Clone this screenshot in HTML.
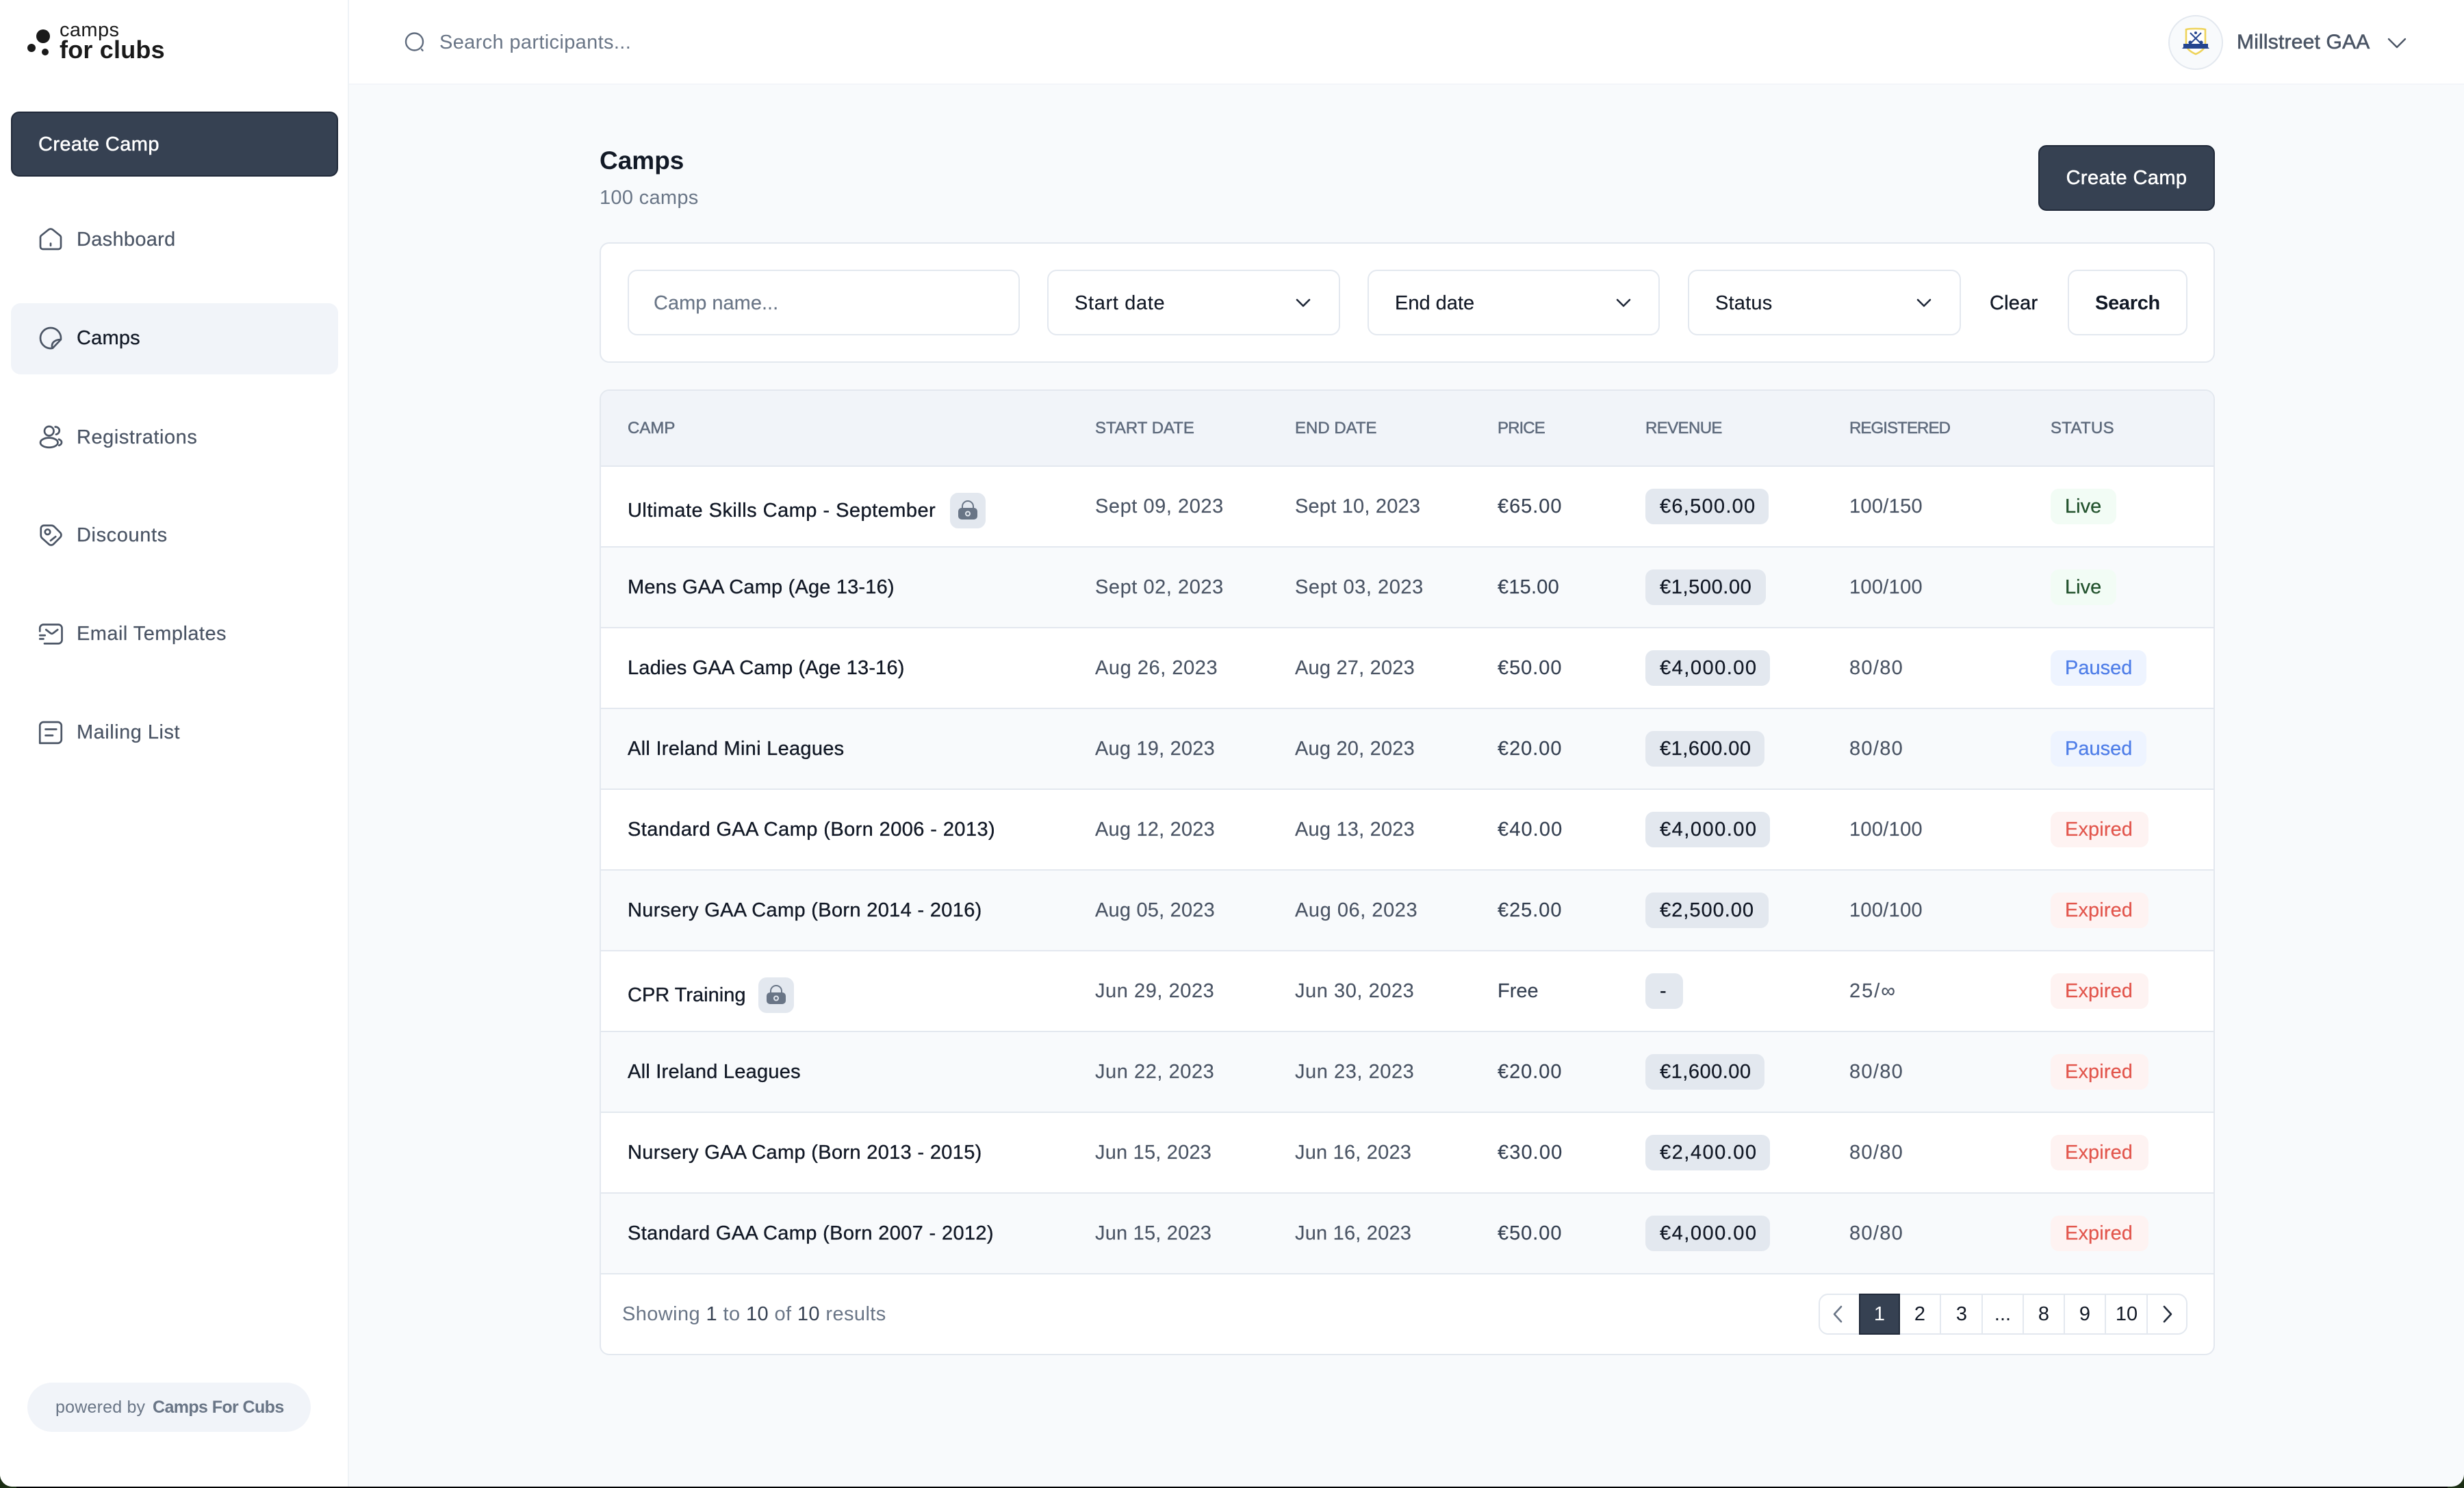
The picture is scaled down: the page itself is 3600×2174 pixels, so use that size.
<!DOCTYPE html>
<html lang="en">
<head>
<meta charset="utf-8">
<title>Camps</title>
<style>
*{box-sizing:border-box;margin:0;padding:0}
html,body{width:3600px;height:2174px;overflow:hidden;background:#000}
body{position:relative;font-family:"Liberation Sans",sans-serif;color:#121926}
.cn{position:absolute;width:24px;height:24px;background:#1b2e14}
.win{position:absolute;left:0;top:0;width:3600px;height:2172px;background:#f8fafc;overflow:hidden;border-radius:0 0 18px 18px}
.a{position:absolute;white-space:nowrap}
.m{-webkit-text-stroke:.4px currentColor}
.side{position:absolute;left:0;top:0;width:510px;height:2172px;background:#fff;border-right:2px solid #eef2f6}
.top{position:absolute;left:510px;top:0;width:3090px;height:124px;background:#fff;border-bottom:2px solid #f3f5f9}
.btn{position:absolute;background:#364152;border:2px solid #202939;border-radius:12px;color:#fff;font-size:29px;line-height:93px;letter-spacing:.4px;-webkit-text-stroke:.5px #fff}
.nav{position:absolute;left:112px;font-size:29px;line-height:40px;height:40px;color:#4b5565;white-space:nowrap;-webkit-text-stroke:.2px #4b5565}
.ic{position:absolute;left:56px;width:36px;height:36px;fill:none;stroke:#4b5565;stroke-width:1.8;stroke-linecap:round;stroke-linejoin:round}
.card{position:absolute;background:#fff;border:2px solid #e3e8ef;border-radius:14px}
.fld{position:absolute;top:394px;height:96px;background:#fff;border:2px solid #e3e8ef;border-radius:14px;font-size:29px;line-height:94px;color:#121926;white-space:nowrap;-webkit-text-stroke:.15px currentColor}
.chev{position:absolute;top:436px;width:24px;height:14px;fill:none;stroke:#202939;stroke-width:2.6;stroke-linecap:round;stroke-linejoin:round}
.tbl{position:absolute;left:876px;top:569px;width:2360px;height:1411px;background:#fff;border:2px solid #e3e8ef;border-radius:14px;overflow:hidden}
.hd{position:absolute;left:0;top:0;width:100%;height:111px;background:#f1f4f9;border-bottom:2px solid #e3e8ef;font-size:24px;line-height:109px;color:#5f6b7d;-webkit-text-stroke:.5px #5f6b7d}
.hd span{position:absolute;white-space:nowrap}
.r{position:absolute;left:0;width:100%;height:118px;border-bottom:2px solid #e3e8ef;background:#fff;font-size:29px;line-height:116px;color:#4b5565;-webkit-text-stroke:.15px #4b5565}
.r.alt{background:#f8fafc}
.r span,.r b{position:absolute;white-space:nowrap;font-weight:400}
.c1{left:39px}.c2{left:722px}.c3{left:1014px}.c5{left:1526px}.c6{left:1824px}.c7{left:2118px}
.r .c4{left:1310px;color:#364152;-webkit-text-stroke:.15px #364152}
.r .n{left:39px;color:#121926;-webkit-text-stroke:.35px #121926}
.r .n.lk{top:6px}
.r b{top:32px;height:52px;line-height:52px;border-radius:12px;padding:0 0 0 21px}
.rev{background:#e3e8ef;color:#121926;-webkit-text-stroke:.25px #121926;left:1526px}
.live{background:#f2fcf5;color:#22522d;left:2118px;width:96px;-webkit-text-stroke:.25px #22522d}
.paused{background:#eef4ff;color:#4f7ee8;left:2118px;width:140px;-webkit-text-stroke:.25px #4f7ee8}
.expired{background:#fef3f2;color:#e2564d;left:2118px;width:143px;letter-spacing:.1px;-webkit-text-stroke:.2px #e2564d}
.e1{letter-spacing:.2px}.e3{letter-spacing:.55px}.e0{letter-spacing:.1px}
.p1{letter-spacing:.95px}.p2{letter-spacing:.2px}.p3{letter-spacing:1.1px}
.g1{letter-spacing:.3px}.g2{letter-spacing:1.3px}
.lock{position:absolute;top:38px;width:52px;height:52px;background:#e3e8ef;border-radius:12px}
.lock svg{position:absolute;left:0;top:0;width:52px;height:52px}
.pg{position:absolute;left:2657px;top:1890px;width:539px;height:60px;border:2px solid #e3e8ef;border-radius:14px;background:#fff}
.pc{position:absolute;top:1890px;height:60px;width:60px;text-align:center;font-size:29px;line-height:57px;color:#121926;border-right:2px solid #e3e8ef;border-top:2px solid #e3e8ef;border-bottom:2px solid #e3e8ef}
</style>
</head>
<body>
<div class="cn" style="left:0;bottom:0"></div>
<div class="cn" style="right:0;bottom:0"></div>
<div class="win">

  <div class="top"></div>
  <div class="side"></div>

  <!-- logo -->
  <svg class="a" style="left:0;top:0" width="300" height="120" viewBox="0 0 300 120">
    <circle cx="63" cy="53" r="10" fill="#1a1a1a"/>
    <circle cx="46" cy="70" r="6" fill="#1a1a1a"/>
    <circle cx="66" cy="76" r="5" fill="#1a1a1a"/>
    <text x="87" y="53" font-family="Liberation Sans" font-size="29" letter-spacing=".4" fill="#1a1a1a">camps</text>
    <text x="87" y="85" font-family="Liberation Sans" font-size="36" font-weight="700" letter-spacing=".2" fill="#1a1a1a">for clubs</text>
  </svg>

  <div class="btn" style="left:16px;top:163px;width:478px;height:95px;padding-left:38px">Create Camp</div>

  <div class="a" style="left:16px;top:443px;width:478px;height:104px;background:#f1f4f9;border-radius:14px"></div>

  <svg class="ic" style="top:331px" viewBox="0 0 24 24"><path d="M2 10.6c0-.8.4-1.500 1-2l7-5.600c1.200-.9 2.800-.9 4 0l7 5.600c.6.5 1 1.200 1 2v9a2.400 2.400 0 0 1-2.400 2.400H4.400A2.400 2.400 0 0 1 2 19.600z"/><path d="M12 18.500V16.500"/></svg>
  <div class="nav" style="top:330px;letter-spacing:.3px">Dashboard</div>

  <svg class="ic" style="top:476px" viewBox="0 0 24 24"><path d="M12 22a10 10 0 1 1 10-10c0 .5 0 1-.15 1.500L14 21.700c-.6.200-1.300.3-2 .3z"/><path d="M14 21.700c-1.200-1-.8-4 .5-5.500 1.600-2 4.800-3 7.350-2.700"/></svg>
  <div class="nav" style="top:474px;color:#121926;-webkit-text-stroke:.3px #121926;letter-spacing:.2px">Camps</div>

  <svg class="ic" style="top:620px" viewBox="0 0 24 24"><circle cx="10.500" cy="6.500" r="4.500"/><ellipse cx="10.500" cy="17.800" rx="8.500" ry="4.700"/><path d="M16.500 2.400c2.300 0 4 1.600 4 3.600s-1.500 3.500-3.200 3.800"/><path d="M20 14.500c1.700.7 2.700 1.800 2.700 3s-.9 2.400-2.500 3"/></svg>
  <div class="nav" style="top:619px;letter-spacing:.55px">Registrations</div>

  <svg class="ic" style="top:764px" viewBox="0 0 24 24"><path d="M5.500 2.500h7.200c1.100 0 2.100.4 2.900 1.200l5.700 5.700c1.300 1.300 1.300 3.400 0 4.700l-6.500 6.500c-1.300 1.300-3.400 1.300-4.700 0l-6.200-5.500c-.9-.8-1.400-1.900-1.400-3.100V5.500c0-1.700 1.300-3 3-3z"/><circle cx="9" cy="8.800" r="2.500"/><path d="M12 17.200l4.800-3.800"/></svg>
  <div class="nav" style="top:762px;letter-spacing:.6px">Discounts</div>

  <svg class="ic" style="top:908px" viewBox="0 0 24 24"><path d="M1.500 9.500V6.500A3.500 3.500 0 0 1 5 3h14.500A3.500 3.500 0 0 1 23 6.500v11.500a3.500 3.500 0 0 1-3.500 3.500H6"/><path d="M7.500 8l4.700 3.600c.6.400 1.300.4 1.900 0L18.800 8"/><path d="M1.500 13.500H6.500"/><path d="M1.500 17H5"/></svg>
  <div class="nav" style="top:906px;letter-spacing:.45px">Email Templates</div>

  <svg class="ic" style="top:1052px" viewBox="0 0 24 24"><path d="M1.500 22.500V5.500A3.500 3.500 0 0 1 5 2h14a3.500 3.500 0 0 1 3.500 3.500v13.500a3.500 3.500 0 0 1-3.500 3.500H1.500z"/><path d="M7 9h10.500"/><path d="M7 15h7"/></svg>
  <div class="nav" style="top:1050px;letter-spacing:.5px">Mailing List</div>

  <div class="a" style="left:40px;top:2020px;width:414px;height:72px;border-radius:36px;background:#f1f4f9"></div>
  <div class="a" style="left:81px;top:2036px;font-size:25px;line-height:40px;color:#697586;letter-spacing:.2px">powered by</div>
  <div class="a" style="left:223px;top:2036px;font-size:25px;line-height:40px;color:#697586;font-weight:700;letter-spacing:-.6px">Camps For Cubs</div>

  <!-- top bar -->
  <svg class="a" style="left:590px;top:45px" width="34" height="34" viewBox="0 0 34 34" fill="none" stroke="#5f6b7d" stroke-width="2.4" stroke-linecap="round"><circle cx="15.500" cy="16" r="12.500"/><path d="M26 27l1.500 1.800"/></svg>
  <div class="a" style="left:642px;top:42px;font-size:29px;line-height:40px;color:#697586;letter-spacing:.35px">Search participants...</div>

  <div class="a" style="left:3168px;top:22px;width:80px;height:80px;border-radius:50%;background:#f8fafc;border:2px solid #e3e8ef"></div>
  <svg class="a" style="left:3186px;top:40px" width="44" height="44" viewBox="0 0 44 44">
    <path d="M8 3c5-1.500 23-1.500 28 0v21c0 7-7 12-14 15C15 36 8 31 8 24z" fill="#fff" stroke="#eed35a" stroke-width="2.6"/>
    <path d="M14 8l15 15M30 8L15 23" stroke="#25458f" stroke-width="2"/>
    <circle cx="22" cy="8" r="2" fill="#25458f"/><circle cx="14" cy="22" r="2.6" fill="#25458f"/><circle cx="30" cy="22" r="2.6" fill="#25458f"/>
    <path d="M2 31l2-2v-5h36v5l2 2H2z" fill="#25458f"/>
  </svg>
  <div class="a" style="left:3268px;top:42px;font-size:30px;line-height:40px;color:#4b5565;letter-spacing:.2px;-webkit-text-stroke:.6px #4b5565">Millstreet GAA</div>
  <svg class="a" style="left:3488px;top:55px" width="28" height="16" viewBox="0 0 28 16" fill="none" stroke="#4b5565" stroke-width="2.4" stroke-linecap="round" stroke-linejoin="round"><path d="M2 2l12 12L26 2"/></svg>

  <!-- heading -->
  <div class="a" style="left:876px;top:213px;font-size:37px;line-height:44px;font-weight:700;color:#121926">Camps</div>
  <div class="a" style="left:876px;top:269px;font-size:29px;line-height:40px;color:#697586;letter-spacing:.3px">100 camps</div>
  <div class="btn" style="left:2978px;top:212px;width:258px;height:96px;text-align:center">Create Camp</div>

  <!-- filter -->
  <div class="card" style="left:876px;top:354px;width:2360px;height:176px"></div>
  <div class="fld" style="left:917px;width:573px;padding-left:36px;color:#697586">Camp name...</div>
  <div class="fld" style="left:1530px;width:428px;padding-left:38px;letter-spacing:.65px">Start date</div>
  <div class="fld" style="left:1998px;width:427px;padding-left:38px">End date</div>
  <div class="fld" style="left:2466px;width:399px;padding-left:38px;letter-spacing:.2px">Status</div>
  <svg class="chev" style="left:1892px" viewBox="0 0 24 14"><path d="M3 2l9 9 9-9"/></svg>
  <svg class="chev" style="left:2360px" viewBox="0 0 24 14"><path d="M3 2l9 9 9-9"/></svg>
  <svg class="chev" style="left:2799px" viewBox="0 0 24 14"><path d="M3 2l9 9 9-9"/></svg>
  <div class="a m" style="left:2907px;top:423px;font-size:29px;line-height:40px;color:#121926;letter-spacing:.2px">Clear</div>
  <div class="fld" style="left:3021px;width:175px;text-align:center;font-weight:700;letter-spacing:-.3px;-webkit-text-stroke:0">Search</div>

  <!-- table -->
  <div class="tbl">
    <div class="hd">
      <span class="c1">CAMP</span><span class="c2">START DATE</span><span class="c3">END DATE</span><span style="left:1310px;letter-spacing:-.9px">PRICE</span><span class="c5" style="letter-spacing:-.6px">REVENUE</span><span class="c6" style="letter-spacing:-.9px">REGISTERED</span><span class="c7" style="letter-spacing:.3px">STATUS</span>
    </div>

    <div class="r" style="top:111px"><span class="n lk" style="letter-spacing:.47px">Ultimate Skills Camp - September</span><div class="lock" style="left:510px;top:38px"><svg viewBox="0 0 52 52"><path d="M18 23v-3a8 8 0 0 1 16 0v3" fill="none" stroke="#697586" stroke-width="2"/><rect x="12" y="22" width="28" height="17" rx="5" fill="#697586"/><circle cx="26" cy="30.500" r="3" fill="none" stroke="#e3e8ef" stroke-width="2"/></svg></div><span class="c2 e3">Sept 09, 2023</span><span class="c3 e1">Sept 10, 2023</span><span class="c4 p1">€65.00</span><b class="rev" style="width:180px;letter-spacing:1.27px">€6,500.00</b><span class="c6 g1">100/150</span><b class="live">Live</b></div>

    <div class="r alt" style="top:229px"><span class="n" style="letter-spacing:.18px">Mens GAA Camp (Age 13-16)</span><span class="c2 e3">Sept 02, 2023</span><span class="c3 e3">Sept 03, 2023</span><span class="c4 p2">€15.00</span><b class="rev" style="width:176px;letter-spacing:.6px">€1,500.00</b><span class="c6 g1">100/100</span><b class="live">Live</b></div>

    <div class="r" style="top:347px"><span class="n" style="letter-spacing:.18px">Ladies GAA Camp (Age 13-16)</span><span class="c2 e3">Aug 26, 2023</span><span class="c3 e1">Aug 27, 2023</span><span class="c4 p1">€50.00</span><b class="rev" style="width:182px;letter-spacing:1.5px">€4,000.00</b><span class="c6 g2">80/80</span><b class="paused">Paused</b></div>

    <div class="r alt" style="top:465px"><span class="n" style="letter-spacing:.29px">All Ireland Mini Leagues</span><span class="c2 e1">Aug 19, 2023</span><span class="c3 e1">Aug 20, 2023</span><span class="c4 p1">€20.00</span><b class="rev" style="width:174px;letter-spacing:.5px">€1,600.00</b><span class="c6 g2">80/80</span><b class="paused">Paused</b></div>

    <div class="r" style="top:583px"><span class="n" style="letter-spacing:.41px">Standard GAA Camp (Born 2006 - 2013)</span><span class="c2 e1">Aug 12, 2023</span><span class="c3 e1">Aug 13, 2023</span><span class="c4 p3">€40.00</span><b class="rev" style="width:182px;letter-spacing:1.5px">€4,000.00</b><span class="c6 g1">100/100</span><b class="expired">Expired</b></div>

    <div class="r alt" style="top:701px"><span class="n" style="letter-spacing:.33px">Nursery GAA Camp (Born 2014 - 2016)</span><span class="c2 e1">Aug 05, 2023</span><span class="c3 e3">Aug 06, 2023</span><span class="c4 p1">€25.00</span><b class="rev" style="width:180px;letter-spacing:1px">€2,500.00</b><span class="c6 g1">100/100</span><b class="expired">Expired</b></div>

    <div class="r" style="top:819px"><span class="n lk">CPR Training</span><div class="lock" style="left:230px;top:38px"><svg viewBox="0 0 52 52"><path d="M18 23v-3a8 8 0 0 1 16 0v3" fill="none" stroke="#697586" stroke-width="2"/><rect x="12" y="22" width="28" height="17" rx="5" fill="#697586"/><circle cx="26" cy="30.500" r="3" fill="none" stroke="#e3e8ef" stroke-width="2"/></svg></div><span class="c2 e3">Jun 29, 2023</span><span class="c3 e3">Jun 30, 2023</span><span class="c4">Free</span><b class="rev" style="width:55px">-</b><span class="c6" style="letter-spacing:2px">25/∞</span><b class="expired">Expired</b></div>

    <div class="r alt" style="top:937px"><span class="n" style="letter-spacing:.24px">All Ireland Leagues</span><span class="c2 e3">Jun 22, 2023</span><span class="c3 e3">Jun 23, 2023</span><span class="c4 p1">€20.00</span><b class="rev" style="width:174px;letter-spacing:.5px">€1,600.00</b><span class="c6 g2">80/80</span><b class="expired">Expired</b></div>

    <div class="r" style="top:1055px"><span class="n" style="letter-spacing:.33px">Nursery GAA Camp (Born 2013 - 2015)</span><span class="c2 e1">Jun 15, 2023</span><span class="c3 e1">Jun 16, 2023</span><span class="c4 p3">€30.00</span><b class="rev" style="width:182px;letter-spacing:1.5px">€2,400.00</b><span class="c6 g2">80/80</span><b class="expired">Expired</b></div>

    <div class="r alt" style="top:1173px"><span class="n" style="letter-spacing:.35px">Standard GAA Camp (Born 2007 - 2012)</span><span class="c2 e1">Jun 15, 2023</span><span class="c3 e1">Jun 16, 2023</span><span class="c4 p1">€50.00</span><b class="rev" style="width:182px;letter-spacing:1.5px">€4,000.00</b><span class="c6 g2">80/80</span><b class="expired">Expired</b></div>
  </div>

  <div class="a" style="left:909px;top:1900px;font-size:29px;line-height:40px;color:#697586;letter-spacing:.4px">Showing <span style="color:#364152">1</span> to <span style="color:#364152">10</span> of <span style="color:#364152">10</span> results</div>

  <!-- pagination -->
  <div class="pg"></div>
  <div class="pc" style="left:2776px">2</div>
  <div class="pc" style="left:2837px">3</div>
  <div class="pc" style="left:2897px">...</div>
  <div class="pc" style="left:2957px">8</div>
  <div class="pc" style="left:3017px">9</div>
  <div class="pc" style="left:3078px">10</div>
  <div class="pc" style="left:2716px;background:#364152;color:#fff;border:2px solid #202939">1</div>
  <svg class="a" style="left:2677px;top:1906px" width="16" height="28" viewBox="0 0 16 28" fill="none" stroke="#697586" stroke-width="2.6" stroke-linecap="round" stroke-linejoin="round"><path d="M13 3L3 14l10 11"/></svg>
  <svg class="a" style="left:3159px;top:1906px" width="16" height="28" viewBox="0 0 16 28" fill="none" stroke="#202939" stroke-width="2.6" stroke-linecap="round" stroke-linejoin="round"><path d="M3 3l10 11L3 25"/></svg>

</div>
</body>
</html>
